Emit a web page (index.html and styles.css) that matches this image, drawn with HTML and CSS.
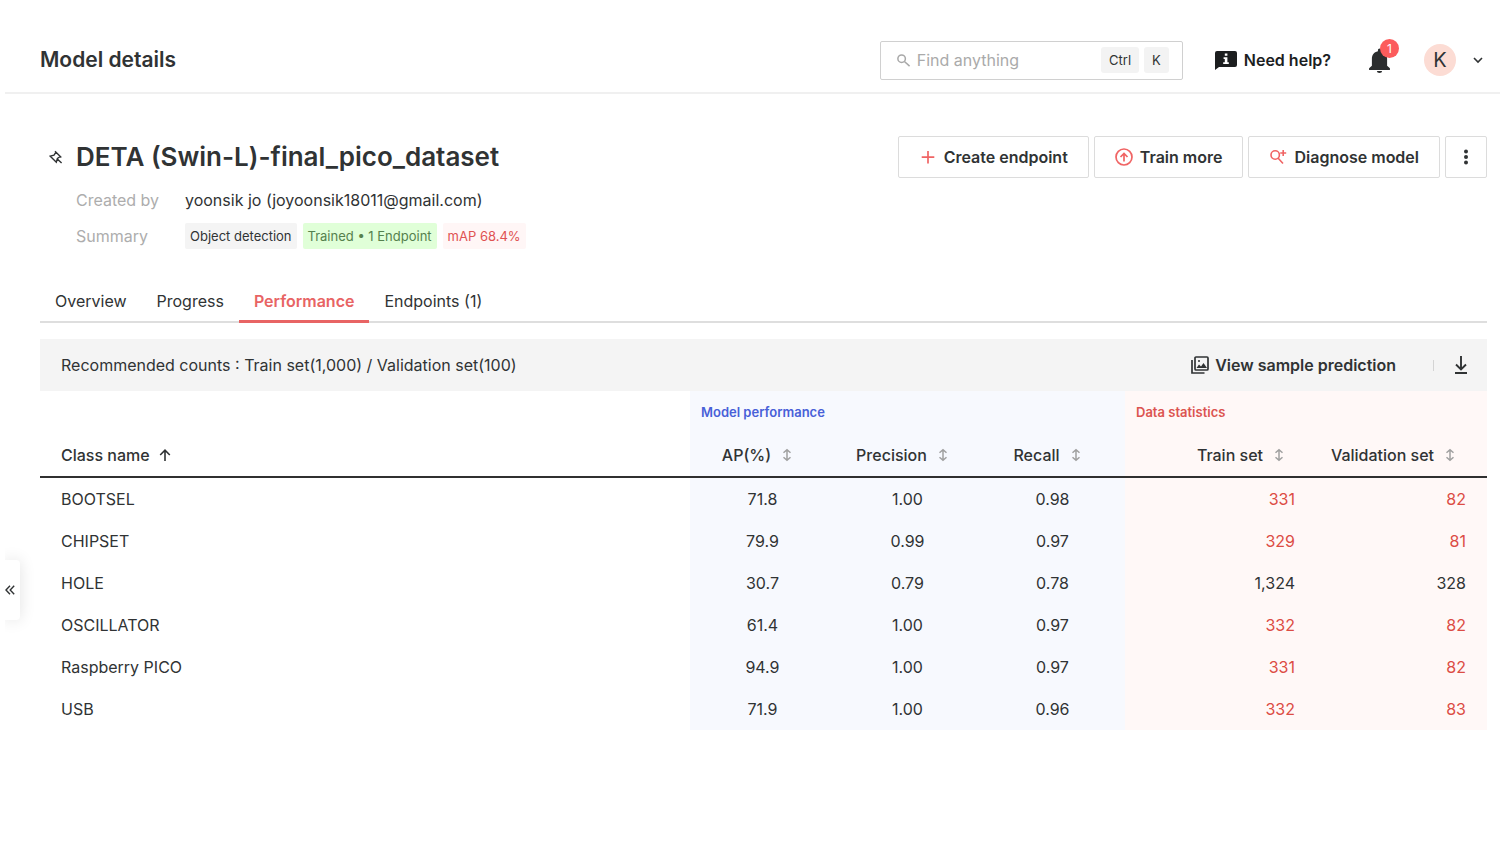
FILE: index.html
```html
<!DOCTYPE html>
<html lang="en">
<head>
<meta charset="utf-8">
<meta name="viewport" content="width=device-width, initial-scale=1">
<title>Model details</title>
<link rel="stylesheet" href="styles.css">
</head>
<body>
<svg class="defs" aria-hidden="true">
  <symbol id="sort" viewBox="0 0 16 16"><path d="M8 2v12M4 5.500l4-3.500 4 3.500M4 10.500l4 3.500 4-3.500" fill="none" stroke="currentColor" stroke-width="1.700"/></symbol>
</svg>
<header class="topbar">
  <h1 class="page-title">Model details</h1>
  <label class="search">
    <svg class="search-icon" viewBox="0 0 16 16" aria-hidden="true"><g fill="none" stroke="currentColor" stroke-width="1.6"><circle cx="6" cy="6" r="4"/><path d="M9 9l5.5 5"/></g></svg>
    <input class="search-input" type="text" placeholder="Find anything" aria-label="Find anything">
    <kbd class="key">Ctrl</kbd><kbd class="key">K</kbd>
  </label>
  <button class="help" type="button">
    <svg class="help-icon" viewBox="0 0 22 20" aria-hidden="true"><path d="M2 1h18a2 2 0 0 1 2 2v12a2 2 0 0 1-2 2H4l-4 3V3a2 2 0 0 1 2-2z" fill="#1c1e1f"/><path d="M9.8 3.6h2.6v2.1H9.8zM8.6 7.2h3.8v5h1.4v1.7H8.2v-1.7h1.6V8.9H8.6z" fill="#fff"/></svg>
    Need help?
  </button>
  <button class="bell" type="button" aria-label="Notifications">
    <svg class="bell-icon" viewBox="0 0 20 24" aria-hidden="true"><path d="M8.5 2a1.5 1.5 0 0 1 3 0v1c4 .8 5.8 3.700 5.800 7.300V17l2.700 2.500V21H0v-1.500L2.700 17v-6.700C2.700 6.700 4.500 3.800 8.500 3zM7.500 22h5a2.500 2 0 0 1-5 0z" fill="#2b2d2e"/></svg>
    <span class="badge">1</span>
  </button>
  <button class="account" type="button" aria-label="Account K">
    <span class="avatar">K</span>
    <svg class="chevron" viewBox="0 0 10 10" aria-hidden="true"><path d="M1 3l4 4 4-4" fill="none" stroke="currentColor" stroke-width="1.6"/></svg>
  </button>
</header>

<main class="content">
  <section class="summary">
    <div class="model">
      <div class="name-row">
        <button class="pin" type="button" aria-label="Pin model">
          <svg class="pin-icon" viewBox="0 0 14 14" aria-hidden="true"><path d="M6 1.200L12.300 7.500M7 2.200L5 5.100 1.300 6.200 7.300 12.200 8.400 8.500 11.300 6.500M8 8.700l4.600 4.300" fill="none" stroke="currentColor" stroke-width="1.400"/></svg>
        </button>
        <h2 class="model-name">DETA (Swin-L)-final_pico_dataset</h2>
      </div>
      <dl class="facts">
        <dt>Created by</dt><dd>yoonsik jo (joyoonsik18011@gmail.com)</dd>
        <dt>Summary</dt>
        <dd class="tags"><span class="tag tag-grey">Object detection</span><span class="tag tag-green">Trained • 1 Endpoint</span><span class="tag tag-red">mAP 68.4%</span></dd>
      </dl>
    </div>
    <div class="actions">
      <button class="action" type="button"><svg class="action-icon" viewBox="0 0 18 18" aria-hidden="true"><path d="M9 3v12.500M2.700 9.200h12.600" fill="none" stroke="currentColor" stroke-width="1.700"/></svg>Create endpoint</button>
      <button class="action" type="button"><svg class="action-icon" viewBox="0 0 18 18" aria-hidden="true"><g fill="none" stroke="currentColor" stroke-width="1.700"><circle cx="9" cy="9" r="8"/><path d="M9 13.500V5.500M5.500 9L9 5.400 12.500 9"/></g></svg>Train more</button>
      <button class="action" type="button"><svg class="action-icon" viewBox="0 0 18 18" aria-hidden="true"><g fill="none" stroke="currentColor" stroke-width="1.600"><circle cx="6.200" cy="7" r="4.200"/><path d="M9 10l5 5.500M11.200 5h6M14.200 2v6"/></g></svg>Diagnose model</button>
      <button class="action action-more" type="button" aria-label="More actions"><svg class="dots" viewBox="0 0 4 16" aria-hidden="true"><circle cx="2" cy="2.500" r="2"/><circle cx="2" cy="8" r="2"/><circle cx="2" cy="13.500" r="2"/></svg></button>
    </div>
  </section>

  <nav class="tabs">
    <a class="tab" href="#overview">Overview</a>
    <a class="tab" href="#progress">Progress</a>
    <a class="tab tab-active" href="#performance" aria-current="page">Performance</a>
    <a class="tab" href="#endpoints">Endpoints (1)</a>
  </nav>

  <section class="panel">
    <div class="toolbar">
      <p class="counts">Recommended counts : Train set(1,000) / Validation set(100)</p>
      <button class="sample" type="button"><svg class="sample-icon" viewBox="0 0 18 18" aria-hidden="true"><g fill="none" stroke="currentColor" stroke-width="1.700"><rect x="4" y="1" width="13" height="13" rx="1"/><path d="M1 4v13h12.500"/></g><path d="M5.500 12l2.500-3.500 2 2 2.500-3.500 3.500 5z" fill="currentColor"/><circle cx="8" cy="5" r="1" fill="currentColor"/></svg>View sample prediction</button>
      <span class="divider"></span>
      <button class="download" type="button" aria-label="Download"><svg class="download-icon" viewBox="0 0 14 18" aria-hidden="true"><path d="M7 0v13M2 8.500l5 5 5-5M1 17h12" fill="none" stroke="currentColor" stroke-width="1.900"/></svg></button>
    </div>
    <table class="results">
      <colgroup><col><col class="col-perf" span="3"><col class="col-train"><col class="col-val"></colgroup>
      <thead>
        <tr class="groups"><td></td><th class="perf" colspan="3" scope="colgroup">Model performance</th><th class="stat" colspan="2" scope="colgroup">Data statistics</th></tr>
        <tr class="heads">
          <th scope="col"><button class="sorter" type="button">Class name<svg class="up" viewBox="0 0 12 12" aria-hidden="true"><path d="M6 12V1.500M1.200 6L6 1.200 10.800 6" fill="none" stroke="currentColor" stroke-width="1.600"/></svg></button></th>
          <th class="perf" scope="col"><button class="sorter" type="button">AP(%)<svg class="sort"><use href="#sort"/></svg></button></th>
          <th class="perf" scope="col"><button class="sorter" type="button">Precision<svg class="sort"><use href="#sort"/></svg></button></th>
          <th class="perf" scope="col"><button class="sorter" type="button">Recall<svg class="sort"><use href="#sort"/></svg></button></th>
          <th class="stat" scope="col"><button class="sorter" type="button">Train set<svg class="sort"><use href="#sort"/></svg></button></th>
          <th class="stat" scope="col"><button class="sorter" type="button">Validation set<svg class="sort"><use href="#sort"/></svg></button></th>
        </tr>
      </thead>
      <tbody>
        <tr><td>BOOTSEL</td><td class="perf">71.8</td><td class="perf">1.00</td><td class="perf">0.98</td><td class="stat low">331</td><td class="stat low">82</td></tr>
        <tr><td>CHIPSET</td><td class="perf">79.9</td><td class="perf">0.99</td><td class="perf">0.97</td><td class="stat low">329</td><td class="stat low">81</td></tr>
        <tr><td>HOLE</td><td class="perf">30.7</td><td class="perf">0.79</td><td class="perf">0.78</td><td class="stat">1,324</td><td class="stat">328</td></tr>
        <tr><td>OSCILLATOR</td><td class="perf">61.4</td><td class="perf">1.00</td><td class="perf">0.97</td><td class="stat low">332</td><td class="stat low">82</td></tr>
        <tr><td>Raspberry PICO</td><td class="perf">94.9</td><td class="perf">1.00</td><td class="perf">0.97</td><td class="stat low">331</td><td class="stat low">82</td></tr>
        <tr><td>USB</td><td class="perf">71.9</td><td class="perf">1.00</td><td class="perf">0.96</td><td class="stat low">332</td><td class="stat low">83</td></tr>
      </tbody>
    </table>
  </section>
</main>
<div class="drawer-clip">
  <button class="drawer" type="button" aria-label="Collapse sidebar"><svg class="drawer-icon" viewBox="0 0 10 10" aria-hidden="true"><path d="M5 .8L1 5l4 4.200M9.200 .8L5.200 5l4 4.200" fill="none" stroke="currentColor" stroke-width="1.400"/></svg></button>
</div>
</body>
</html>
```
FILE: styles.css
```css
* { box-sizing: border-box; }
body { margin: 0; background: #fff; color: #303334; font: 16px/24px Inter, "Liberation Sans", sans-serif; }
h1, h2, p, dl, dd { margin: 0; }
button { font: inherit; color: inherit; background: none; border: 0; padding: 0; display: flex; align-items: center; cursor: pointer; }
svg { flex: none; display: block; }
.defs { position: absolute; width: 0; height: 0; }

.topbar { display: flex; align-items: center; margin-left: 5px; padding: 28px 17px 0 35px; height: 94px; border-bottom: 2px solid #f0f0f0; }
.page-title { margin-right: auto; font-size: 21px; font-weight: 600; }
.search { display: flex; align-items: center; width: 303px; height: 39px; padding: 0 13px 0 15px; border: 1px solid #d0d0d0; border-radius: 2px; }
.search-icon { width: 15px; height: 15px; color: #a8a8a8; }
.search-input { flex: 1; min-width: 0; padding: 0 6px; border: 0; outline: 0; font: inherit; color: inherit; }
.search-input::placeholder { color: #aaa; opacity: 1; }
.key { margin-left: 5px; padding: 0 8px; border-radius: 3px; background: #f3f3f3; font: 13px/26px Inter, sans-serif; }
.help { margin-left: 32px; gap: 7px; color: #1c1e1f; font-weight: 600; }
.help-icon { width: 22px; height: 20px; }
.bell { position: relative; margin-left: 38px; }
.bell-icon { width: 21px; height: 25px; }
.badge { position: absolute; left: 11px; top: -9px; width: 19px; height: 19px; border-radius: 50%; background: #fc5c5c; color: #fff; font-size: 12px; line-height: 19px; text-align: center; }
.account { margin-left: 34px; gap: 17px; }
.avatar { width: 32px; height: 32px; border-radius: 50%; background: #fcdcd4; font-size: 20px; line-height: 32px; text-align: center; }
.chevron { width: 10px; height: 10px; }

.content { padding: 42px 13px 32px 40px; }
.summary { display: flex; justify-content: space-between; align-items: flex-start; }
.name-row { display: flex; align-items: center; height: 42px; }
.pin { width: 36px; padding-left: 9px; }
.pin-icon { width: 14px; height: 14px; }
.model-name { font-size: 26px; line-height: 36px; font-weight: 600; }
.facts { display: grid; grid-template-columns: 109px auto; row-gap: 11px; align-items: center; padding: 10px 0 0 36px; }
.facts dt { color: #adadad; }
.tags { display: flex; gap: 6px; }
.tag { padding: 0 5px; border-radius: 2px; font-size: 13px; line-height: 26px; }
.tag-grey { background: #f4f4f4; }
.tag-green { background: #e0ffd8; color: #55814d; }
.tag-red { background: #fff6f6; color: #e05252; }
.actions { display: flex; gap: 5px; }
.action { height: 42px; gap: 7px; padding: 0 20px; border: 1px solid #dcdcdc; border-radius: 2px; font-weight: 600; }
.action-icon { width: 18px; height: 18px; color: #f06464; }
.action-more { width: 42px; padding: 0; justify-content: center; }
.dots { width: 4px; height: 16px; fill: currentColor; }

.tabs { display: flex; margin-top: 33px; border-bottom: 2px solid #dedede; }
.tab { height: 41px; margin-bottom: -2px; padding: 7px 15px 0; color: inherit; text-decoration: none; border-bottom: 3px solid transparent; }
.tab-active { color: #e86464; font-weight: 600; border-color: #e86464; }

.panel { margin-top: 16px; }
.toolbar { display: flex; align-items: center; height: 52px; padding: 0 19px 0 21px; background: #f4f4f4; }
.counts { margin-right: auto; }
.sample { gap: 6px; font-weight: 600; }
.sample-icon { width: 18px; height: 18px; }
.divider { width: 1px; height: 11px; margin: 0 20px 0 37px; background: #d4d4d4; }
.download-icon { width: 14px; height: 18px; }

.results { width: 100%; border-spacing: 0; table-layout: fixed; }
.col-perf { width: 145px; }
.col-train { width: 191px; }
.col-val { width: 171px; }
.results th, .results td { height: 42px; padding: 0 21px; text-align: left; font-weight: 400; }
.results .perf { background: #f7f9fe; text-align: center; }
.results .stat { padding-left: 0; background: #fff8f7; text-align: right; }
.results .low { color: #dc4c44; }
.results .groups th { padding: 0 11px; font-size: 13px; font-weight: 600; text-align: left; }
.groups .perf { color: #4860d8; }
.groups .stat { color: #dc5450; }
.results .heads th { height: 45px; border-bottom: 2px solid #303030; font-weight: 500; }
.sorter { display: inline-flex; vertical-align: middle; white-space: nowrap; }
.perf .sorter { margin: 0 -20px; }
.up { width: 12px; height: 12px; margin-left: 9px; }
.sort { width: 16px; height: 14px; margin: 0 8px; color: #a0a0a0; }

.drawer-clip { position: fixed; left: 5px; top: 540px; width: 40px; height: 100px; overflow: hidden; pointer-events: none; }
.drawer { width: 15px; height: 60px; margin-top: 20px; background: #fff; border-radius: 0 4px 4px 0; box-shadow: 0 0 16px rgba(0, 0, 0, .12); pointer-events: auto; }
.drawer-icon { width: 10px; height: 10px; }
```
